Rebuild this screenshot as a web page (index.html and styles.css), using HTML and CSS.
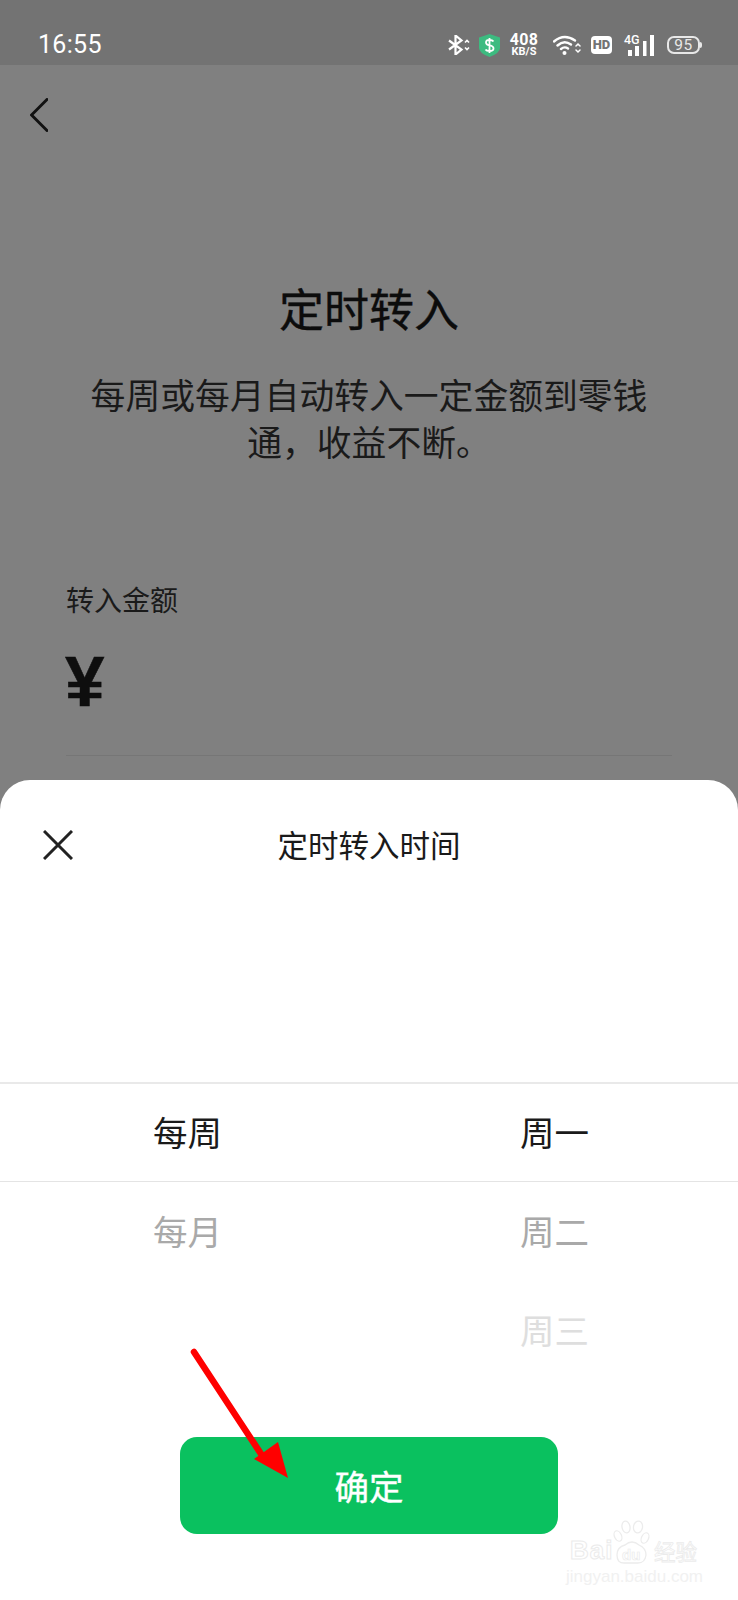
FILE: index.html
```html
<!DOCTYPE html>
<html lang="zh-CN">
<head>
<meta charset="utf-8">
<title>定时转入</title>
<link rel="stylesheet" href="styles.css">
</head>
<body>
<div class="screen">
  <header class="status">
    <span class="time">16:55</span>
    <div class="status-icons">
      <svg class="i-bt" viewBox="0 0 22 20" width="22" height="20" fill="none" stroke="#fff">
        <path d="M1 5.500 13.500 14.500 7.500 19.500V.5L13.500 5.500 1 14.500" stroke-width="2.200"/>
        <path d="M17 7.500 19 5.500 21 7.500M17 12.500 19 14.500 21 12.500" stroke-width="1.700"/>
      </svg>
      <svg class="i-shield" viewBox="0 0 21 23" width="21" height="23">
        <path d="M0 3.500 10.500 0 21 3.500V14Q21 19 10.500 23 0 19 0 14Z" fill="#3dbb80"/>
        <path d="M14.500 7.500Q13.500 6 10.500 6 7 6 7 8.500 7 10.700 10.500 11.300 14.500 12 14.500 14.500 14.500 17 10.500 17 7.500 17 6.500 15.500M10.500 4V19" fill="none" stroke="#fff" stroke-width="1.800"/>
      </svg>
      <div class="speed"><span class="speed-num">408</span><span class="speed-unit">KB/S</span></div>
      <svg class="i-wifi" viewBox="0 0 28 20" width="28" height="20" fill="none" stroke="#fff" stroke-linecap="round">
        <path d="M1 6.500Q11 -2 22 5.500M4.500 10.500Q11 4.500 18 9.500M8 14Q11.500 11 15 13.500" stroke-width="2.400"/>
        <circle cx="11.500" cy="18" r="2" fill="#fff" stroke="none"/>
        <path d="M23 11 25 9 27 11M23 15 25 17 27 15" stroke-width="1.500"/>
      </svg>
      <span class="hd">HD</span>
      <div class="signal">
        <span class="signal-text">4G</span>
        <svg class="i-signal" viewBox="0 0 30 21" width="30" height="21">
          <rect x="4" y="15" width="4" height="6" fill="#fff"/>
          <rect x="11" y="11" width="4" height="10" fill="#fff"/>
          <rect x="19" y="6" width="3.500" height="15" fill="#fff"/>
          <rect x="26" y="0" width="4" height="21" fill="#fff"/>
        </svg>
      </div>
      <div class="battery"><span class="battery-num">95</span></div>
    </div>
  </header>

  <main class="page">
    <svg class="back" viewBox="0 0 18 34" width="18" height="34" fill="none" stroke="#111" stroke-width="3" stroke-linecap="round" aria-label="返回">
      <path d="M17 1.500 1.500 17 17 32.500"/>
    </svg>
    <h1 class="title">定时转入</h1>
    <p class="subtitle">每周或每月自动转入一定金额到零钱通，收益不断。</p>
    <div class="label">转入金额</div>
    <div class="yen">¥</div>
    <div class="divider"></div>
  </main>

  <section class="sheet">
    <div class="sheet-head">
      <svg class="close" viewBox="0 0 30 30" width="30" height="30" fill="none" stroke="#222" stroke-width="3" aria-label="关闭">
        <path d="M1 1 29 29M29 1 1 29"/>
      </svg>
      <div class="sheet-title">定时转入时间</div>
    </div>
    <div class="picker">
      <div class="row row-selected"><span>每周</span><span>周一</span></div>
      <div class="row row-near"><span>每月</span><span>周二</span></div>
      <div class="row row-far"><span></span><span>周三</span></div>
    </div>
    <button class="confirm" type="button">确定</button>
  </section>

  <svg class="arrow" viewBox="0 0 100 132" width="100" height="132">
    <path d="M4 4 75 112" stroke="#f00" stroke-width="6.500" stroke-linecap="round" fill="none"/>
    <path d="M98 130 64 111 88 94Z" fill="#f00"/>
  </svg>

  <div class="watermark">
    <svg class="paw" viewBox="0 0 40 46" width="40" height="46" fill="#fff" stroke="#ececec" stroke-width="1.300">
      <ellipse cx="6" cy="16" rx="3.500" ry="5.500" transform="rotate(-25 6 16)"/>
      <ellipse cx="14" cy="7" rx="4" ry="6" transform="rotate(-10 14 7)"/>
      <ellipse cx="26" cy="7" rx="4.500" ry="6" transform="rotate(10 26 7)"/>
      <ellipse cx="33" cy="18" rx="3.500" ry="5.500" transform="rotate(25 33 18)"/>
      <path d="M5 35Q5 27 13 25 20 19 27 25 34 28 34 35 33 43 26 43H12Q5 43 5 35Z"/>
    </svg>
    <span class="wm-bai">Bai</span>
    <span class="wm-du">du</span>
    <span class="wm-cn">经验</span>
    <span class="wm-url">jingyan.baidu.com</span>
  </div>
</div>
</body>
</html>
```

FILE: styles.css
```css
* { box-sizing: border-box; }
html, body { margin: 0; padding: 0; }
body {
  width: 738px;
  height: 1600px;
  overflow: hidden;
  background: #808080;
  font-family: "Noto Sans CJK SC", "Noto Sans", sans-serif;
}
.screen { position: relative; width: 738px; height: 1600px; overflow: hidden; }

/* status bar */
.status {
  display: flex;
  align-items: center;
  height: 65px;
  padding: 25px 36px 0 38px;
  background: #737373;
  color: #fff;
}
.time { font-family: Roboto, sans-serif; font-size: 25px; letter-spacing: .3px; line-height: 40px; }
.status-icons { display: flex; align-items: center; margin-left: auto; }
.i-bt { margin-right: 9px; }
.i-shield { margin-right: 10px; }
.speed {
  display: flex; flex-direction: column; align-items: center;
  width: 28px; margin-right: 15px;
  font-family: Roboto, sans-serif; font-weight: 700; color: #fff;
}
.speed-num { font-size: 16px; line-height: 13px; letter-spacing: .3px; }
.speed-unit { font-size: 11px; line-height: 11px; }
.i-wifi { margin-right: 10px; }
.hd {
  width: 21px; height: 18px; margin-right: 12px;
  border-radius: 4px; background: #fff; color: #737373;
  font-family: Roboto, sans-serif; font-weight: 900; font-size: 13px; line-height: 18px; text-align: center;
}
.signal { position: relative; width: 30px; height: 21px; margin-right: 13px; }
.i-signal { display: block; }
.signal-text { position: absolute; left: 0; top: -1px; font-family: Roboto, sans-serif; font-size: 12.500px; line-height: 12px; font-weight: 500; color: #fff; }
.battery {
  position: relative;
  width: 33px; height: 18px; margin-right: 2px;
  border: 2px solid #e8e8e8; border-radius: 7px;
  display: flex; align-items: center; justify-content: center;
}
.battery::after {
  content: ""; position: absolute; right: -4px; top: 4px;
  width: 2px; height: 6px; background: #e8e8e8; border-radius: 0 2px 2px 0;
}
.battery-num { font-family: Roboto, sans-serif; font-size: 15.500px; line-height: 14px; color: #e8e8e8; letter-spacing: .5px; }

/* dimmed page */
.page { display: flex; flex-direction: column; height: 715px; padding-top: 33px; color: #111; }
.back { display: block; margin-left: 30px; flex: none; }
.title { margin: 146px 0 0; font-size: 45px; font-weight: 400; line-height: 60px; text-align: center; color: #0c0c0c; -webkit-text-stroke: .4px #0c0c0c; }
.subtitle { margin: 33px 0 0; padding: 0 90px; font-size: 34.800px; line-height: 47px; text-align: center; color: #1a1a1a; }
.label { margin: 114px 0 0 66px; font-size: 28px; line-height: 40px; color: #1a1a1a; }
.yen { margin: 23px 0 0 65px; font-family: "Liberation Sans", sans-serif; font-weight: 700; font-size: 71px; line-height: 80px; color: #0e0e0e; -webkit-text-stroke: .5px #0e0e0e; }
.divider { margin: 33px 66px 0 66px; height: 1px; background: #767676; }

/* bottom sheet */
.sheet { height: 820px; padding-top: 36px; background: #fff; border-radius: 30px 30px 0 0; }
.sheet-head { display: grid; grid-template-columns: 1fr auto 1fr; align-items: center; height: 60px; padding-left: 43px; padding-right: 43px; }
.close { display: block; margin-bottom: 3px; }
.sheet-title { padding-bottom: 4px; font-size: 30.500px; line-height: 56px; color: #1a1a1a; }
.picker { margin-top: 206px; }
.row {
  display: grid; grid-template-columns: 1fr 1fr; align-items: center;
  height: 99px; padding: 0 0 3px 4px;
  font-size: 34.500px; text-align: center;
}
.row-selected { height: 100px; border-top: 2px solid #e9e9e9; border-bottom: 1px solid #e4e4e4; color: #1a1a1a; }
.row-near { color: #a9a9a9; }
.row-far { color: #dedede; }
.confirm {
  display: block; width: 378px; height: 97px; margin: 57px 0 0 180px;
  border: 0; border-radius: 17px; background: #0ac15f; color: #fff;
  font-family: inherit; font-size: 34.500px; font-weight: 400; padding: 0 0 2px 0; -webkit-text-stroke: .4px #fff;
}

/* annotation overlay */
.arrow { position: absolute; left: 190px; top: 1348px; }

/* site watermark */
.watermark { position: absolute; left: 566px; top: 1520px; width: 134px; height: 64px; }
.paw { position: absolute; left: 46px; top: 0; }
.wm-bai, .wm-du, .wm-cn, .wm-url { position: absolute; color: #fff; white-space: nowrap; }
.wm-bai { left: 4px; top: 15px; font-family: "Liberation Sans", sans-serif; font-weight: 700; font-size: 26px; line-height: 30px; letter-spacing: 1px; -webkit-text-stroke: 1px #ebebeb; }
.wm-du { left: 56px; top: 26px; font-family: "Liberation Sans", sans-serif; font-weight: 700; font-size: 15px; line-height: 18px; -webkit-text-stroke: .7px #ebebeb; }
.wm-cn { left: 88px; top: 18px; font-size: 21.500px; line-height: 26px; -webkit-text-stroke: .8px #ebebeb; }
.wm-url { left: 0; top: 48px; font-family: "Liberation Sans", sans-serif; font-size: 17px; line-height: 18px; color: #f1f1f1; }
```
